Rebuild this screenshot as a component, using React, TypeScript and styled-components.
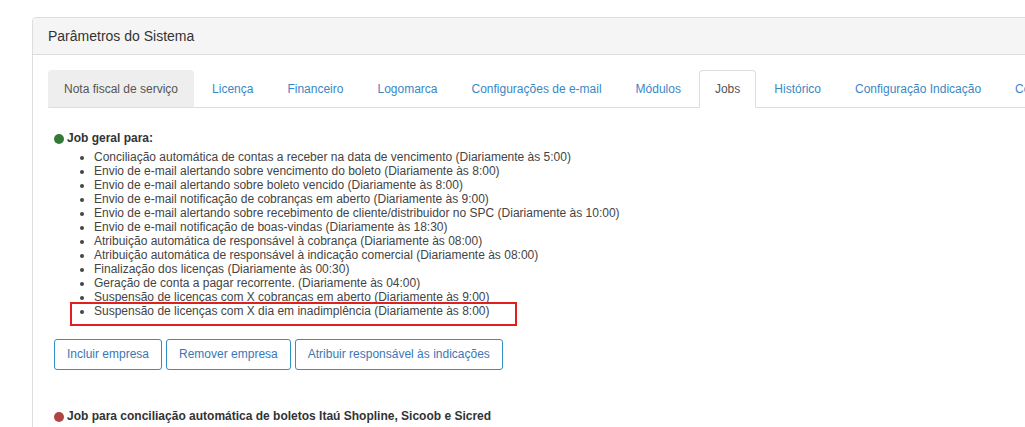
import React from "react";
import styled, { createGlobalStyle } from "styled-components";

const GlobalStyle = createGlobalStyle`
  html, body {
    margin: 0;
    padding: 0;
    background: #ffffff;
    overflow: hidden;
  }
  body {
    font-family: "Liberation Sans", Arial, sans-serif;
    font-size: 12px;
    color: #333;
  }
  * { box-sizing: border-box; }
`;

const Page = styled.div`
  padding: 17px 0 0 32px;
  width: 1200px;
`;

const Panel = styled.div`
  width: 1120px;
  border: 1px solid #dddddd;
  border-radius: 4px;
  background: #fff;
`;

const PanelHeading = styled.div`
  background: #f5f5f5;
  border-bottom: 1px solid #dddddd;
  border-radius: 3px 3px 0 0;
  padding: 10px 15px;
  height: 37px;
`;

const PanelTitle = styled.h3`
  margin: 0;
  font-size: 14px;
  font-weight: normal;
  line-height: 16px;
  color: #333;
`;

const PanelBody = styled.div`
  padding: 15px 15px 60px 15px;
`;

const Tabs = styled.ul`
  display: flex;
  list-style: none;
  margin: 0;
  padding: 0;
  border-bottom: 1px solid #dddddd;
  white-space: nowrap;
`;

const TabItem = styled.li`
  margin: 0 2px -1px 0;
`;

const TabLink = styled.a<{ $state?: "hover" | "active" }>`
  display: block;
  padding: 10px 15px;
  line-height: 16px;
  font-size: 12px;
  border: 1px solid transparent;
  border-radius: 4px 4px 0 0;
  text-decoration: none;
  color: ${(p) => (p.$state ? "#555555" : "#3b87c4")};
  background: ${(p) => (p.$state === "hover" ? "#eeeeee" : p.$state === "active" ? "#ffffff" : "transparent")};
  ${(p) =>
    p.$state === "active"
      ? "border-color: #dddddd #dddddd transparent #dddddd;"
      : p.$state === "hover"
      ? "border-color: #eeeeee #eeeeee #dddddd #eeeeee;"
      : ""}
`;

const TabContent = styled.div`
  padding: 22px 0 0 6px;
`;

const JobHeading = styled.div`
  display: flex;
  align-items: center;
  gap: 3px;
  font-weight: bold;
  font-size: 12px;
  line-height: 17px;
  color: #333;
`;

const Dot = styled.span<{ $color: string }>`
  display: inline-block;
  width: 10px;
  height: 10px;
  border-radius: 50%;
  background: ${(p) => p.$color};
  margin-top: 1px;
`;

const JobList = styled.ul`
  margin: 3px 0 0 0;
  padding: 0 0 0 40px;
  list-style: disc;
  color: #444;
  font-size: 12px;
  line-height: 14px;
`;

const JobItem = styled.li<{ $highlight?: boolean }>`
  position: relative;
  ${(p) =>
    p.$highlight
      ? `
    &::after {
      content: "";
      position: absolute;
      left: -24px;
      top: -2px;
      width: 443px;
      height: 20px;
      border: 2px solid #e0201f;
    }
  `
      : ""}
`;

const ButtonRow = styled.div`
  display: flex;
  gap: 4px;
  margin-top: 21px;
`;

const OutlineButton = styled.button`
  font-family: "Liberation Sans", Arial, sans-serif;
  font-size: 12px;
  line-height: 17px;
  padding: 6px 12px;
  background: #ffffff;
  color: #3a78b5;
  border: 1px solid #3190c6;
  border-radius: 3px;
  cursor: pointer;
`;

const SecondJob = styled.div`
  margin-top: 38px;
`;

const tabs = [
  "Nota fiscal de serviço",
  "Licença",
  "Financeiro",
  "Logomarca",
  "Configurações de e-mail",
  "Módulos",
  "Jobs",
  "Histórico",
  "Configuração Indicação",
  "Configurações",
];

const jobs = [
  "Conciliação automática de contas a receber na data de vencimento (Diariamente às 5:00)",
  "Envio de e-mail alertando sobre vencimento do boleto (Diariamente às 8:00)",
  "Envio de e-mail alertando sobre boleto vencido (Diariamente às 8:00)",
  "Envio de e-mail notificação de cobranças em aberto (Diariamente às 9:00)",
  "Envio de e-mail alertando sobre recebimento de cliente/distribuidor no SPC (Diariamente às 10:00)",
  "Envio de e-mail notificação de boas-vindas (Diariamente às 18:30)",
  "Atribuição automática de responsável à cobrança (Diariamente às 08:00)",
  "Atribuição automática de responsável à indicação comercial (Diariamente às 08:00)",
  "Finalização dos licenças (Diariamente às 00:30)",
  "Geração de conta a pagar recorrente. (Diariamente às 04:00)",
  "Suspensão de licenças com X cobranças em aberto (Diariamente às 9:00)",
  "Suspensão de licenças com X dia em inadimplência (Diariamente às 8:00)",
];

export default function App() {
  return (
    <>
      <GlobalStyle />
      <Page>
        <Panel>
          <PanelHeading>
            <PanelTitle>Parâmetros do Sistema</PanelTitle>
          </PanelHeading>
          <PanelBody>
            <Tabs>
              {tabs.map((t, i) => (
                <TabItem key={t}>
                  <TabLink
                    href="#"
                    $state={i === 0 ? "hover" : t === "Jobs" ? "active" : undefined}
                  >
                    {t}
                  </TabLink>
                </TabItem>
              ))}
            </Tabs>
            <TabContent>
              <JobHeading>
                <Dot $color="#34793a" />
                Job geral para:
              </JobHeading>
              <JobList>
                {jobs.map((j, i) => (
                  <JobItem key={j} $highlight={i === jobs.length - 1}>
                    {j}
                  </JobItem>
                ))}
              </JobList>
              <ButtonRow>
                <OutlineButton>Incluir empresa</OutlineButton>
                <OutlineButton>Remover empresa</OutlineButton>
                <OutlineButton>Atribuir responsável às indicações</OutlineButton>
              </ButtonRow>
              <SecondJob>
                <JobHeading>
                  <Dot $color="#b04444" />
                  Job para conciliação automática de boletos Itaú Shopline, Sicoob e Sicred
                </JobHeading>
              </SecondJob>
            </TabContent>
          </PanelBody>
        </Panel>
      </Page>
    </>
  );
}
